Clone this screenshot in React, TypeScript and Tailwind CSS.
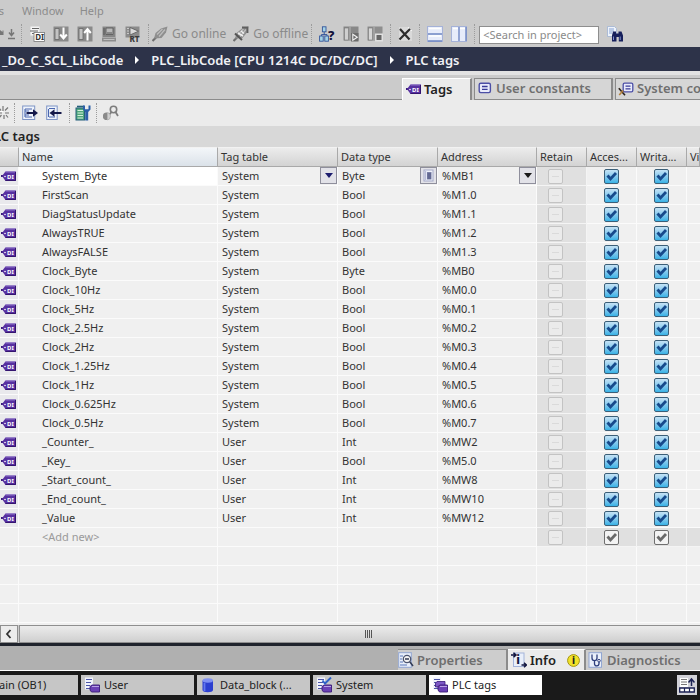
import React, { useState } from 'react';
import clsx from 'clsx';

interface ITag {
  name: string;
  table: string;
  type: string;
  address: string;
}

const TAGS: ITag[] = [
  { name: 'System_Byte', table: 'System', type: 'Byte', address: '%MB1' },
  { name: 'FirstScan', table: 'System', type: 'Bool', address: '%M1.0' },
  { name: 'DiagStatusUpdate', table: 'System', type: 'Bool', address: '%M1.1' },
  { name: 'AlwaysTRUE', table: 'System', type: 'Bool', address: '%M1.2' },
  { name: 'AlwaysFALSE', table: 'System', type: 'Bool', address: '%M1.3' },
  { name: 'Clock_Byte', table: 'System', type: 'Byte', address: '%MB0' },
  { name: 'Clock_10Hz', table: 'System', type: 'Bool', address: '%M0.0' },
  { name: 'Clock_5Hz', table: 'System', type: 'Bool', address: '%M0.1' },
  { name: 'Clock_2.5Hz', table: 'System', type: 'Bool', address: '%M0.2' },
  { name: 'Clock_2Hz', table: 'System', type: 'Bool', address: '%M0.3' },
  { name: 'Clock_1.25Hz', table: 'System', type: 'Bool', address: '%M0.4' },
  { name: 'Clock_1Hz', table: 'System', type: 'Bool', address: '%M0.5' },
  { name: 'Clock_0.625Hz', table: 'System', type: 'Bool', address: '%M0.6' },
  { name: 'Clock_0.5Hz', table: 'System', type: 'Bool', address: '%M0.7' },
  { name: '_Counter_', table: 'User', type: 'Int', address: '%MW2' },
  { name: '_Key_', table: 'User', type: 'Bool', address: '%M5.0' },
  { name: '_Start_count_', table: 'User', type: 'Int', address: '%MW8' },
  { name: '_End_count_', table: 'User', type: 'Int', address: '%MW10' },
  { name: '_Value', table: 'User', type: 'Int', address: '%MW12' },
];

const EMPTY_ROWS = [0, 1, 2, 3];

const Svg: React.FC<{ children: React.ReactNode; className?: string }> = ({ children, className }) => (
  <svg viewBox="0 0 16 16" className={clsx('shrink-0', className || 'size-4')} aria-hidden="true">
    {children}
  </svg>
);

const TagIcon = () => (
  <Svg>
    <path d="M1 8h3" stroke="#3b1d7a" strokeWidth="2" />
    <path d="M2 8L5.500 3.500H16v9.500H5.500z" fill="#5730a0" />
    <path d="M5.500 4H16" stroke="#8d72c8" strokeWidth="1" />
    <path d="M5.500 12.500H15.500V4" fill="none" stroke="#34146f" strokeWidth="1" />
    <circle cx="5" cy="8.500" r="0.800" fill="#fff" />
    <text x="7" y="10.500" fontSize="6" fontWeight="700" fill="#fff">DI</text>
  </Svg>
);

const ConstIcon = () => (
  <Svg>
    <rect x="2.2" y="3.2" width="11.2" height="9.4" rx="1.5" fill="#e9ebfb" stroke="#4c4fa6" strokeWidth="1.4" />
    <path d="M5 6.5h5.6M5 9.3h5.6" stroke="#3a3c98" strokeWidth="1.3" />
  </Svg>
);

const SysConstIcon = () => (
  <Svg>
    <rect x="5.2" y="3.2" width="9.6" height="8.6" rx="1.3" fill="#e9ebfb" stroke="#4c4fa6" strokeWidth="1.3" />
    <path d="M7.5 6.2h5M7.5 8.8h5" stroke="#3a3c98" strokeWidth="1.2" />
    <path d="M0.8 8.200l6.200 7" stroke="#2b211a" strokeWidth="1.600" />
    <path d="M1.200 15l4-4.600" stroke="#b5803c" strokeWidth="1.600" />
  </Svg>
);

const CompileIcon = () => (
  <Svg>
    <path d="M1.500 0.500h9v9h-9z" fill="#f4f4f4" />
    <path d="M3 2.500h7M1 5h8M3 7.500h3" stroke="#666" strokeWidth="1.200" />
    <rect x="5" y="6.500" width="10.500" height="9" fill="#fff" stroke="#777" strokeWidth="0.800" />
    <text x="6.200" y="14" fontSize="8" fontWeight="700" fill="#333">DI</text>
  </Svg>
);

const DownloadIcon = () => (
  <Svg>
    <rect x="0.500" y="0.500" width="15" height="15" fill="#8a8a8a" />
    <path d="M2 2.500h4v11H2z" fill="#c3c3c3" stroke="#666" strokeWidth="0.800" />
    <path d="M10.500 1.500v10M7.200 8.500l3.300 4 3.300-4" fill="none" stroke="#fff" strokeWidth="2" />
  </Svg>
);

const UploadIcon = () => (
  <Svg>
    <rect x="0.500" y="0.500" width="15" height="15" fill="#8a8a8a" />
    <path d="M2 2.500h4v11H2z" fill="#c3c3c3" stroke="#666" strokeWidth="0.800" />
    <path d="M10.500 14.500V4M7.200 7l3.300-4 3.300 4" fill="none" stroke="#fff" strokeWidth="2" />
  </Svg>
);

const SimIcon = () => (
  <Svg>
    <path d="M1.500 0.500h13v10.500h-13z" fill="#868686" />
    <path d="M5 2h7v6.500H5z" fill="#b9b9b9" stroke="#5c5c5c" strokeWidth="0.900" />
    <path d="M6 7h5M3 2v7" stroke="#555" strokeWidth="1" />
    <path d="M1 11.500h14v4H1z" fill="#8d8d8d" />
    <path d="M2.500 13.500h11" stroke="#ccc" strokeWidth="0.800" />
  </Svg>
);

const RuntimeIcon = () => (
  <Svg>
    <path d="M0.500 0.500h14v11h-14z" fill="#8b8b8b" />
    <path d="M2 2.500h2M2 5h2M2 7.500h2" stroke="#c8c8c8" strokeWidth="1" />
    <path d="M5 1.500l8.500 3.700L5 9z" fill="#dadada" stroke="#5b5b5b" strokeWidth="0.800" />
    <text x="4.500" y="15.500" fontSize="8" fontWeight="800" fill="#3a3a3a">RT</text>
  </Svg>
);

const OnlineIcon = ({ off = false }: { off?: boolean }) => (
  <Svg>
    <path d="M0.500 15l3.500-3.500" stroke="#6e6e6e" strokeWidth="2.200" />
    <path d="M2 12.500L3.500 7 9 2.500 15.500 0.500 14 6.500 9.500 12z" fill="#8f8f8f" />
    <path d="M5 8.500l5.500-5.500M7 10.500l6-7" stroke="#bdbdbd" strokeWidth="1.200" />
    {off && <path d="M2 7.500l7 6.500" stroke="#555" strokeWidth="2" />}
    {off && <path d="M9 1.500h5.500V7" fill="none" stroke="#5f5f5f" strokeWidth="1.800" />}
    {off && <path d="M5 7l5 3M8 5l3 2.500" stroke="#efefef" strokeWidth="1.500" />}
  </Svg>
);

const AccessibleIcon = () => (
  <Svg>
    <rect x="3.400" y="0.800" width="3.600" height="5" fill="#a5d3e6" stroke="#33559b" strokeWidth="0.900" />
    <path d="M5.200 6v3M2.400 11V8.600h5.600V11" fill="none" stroke="#33559b" strokeWidth="1" />
    <rect x="0.600" y="10" width="3.600" height="5.200" fill="#a5d3e6" stroke="#33559b" strokeWidth="0.900" />
    <rect x="5.800" y="10" width="3.600" height="5.200" fill="#a5d3e6" stroke="#33559b" strokeWidth="0.900" />
    <text x="9" y="13.500" fontSize="13" fontWeight="800" fill="#10103a">?</text>
  </Svg>
);

const StartCpuIcon = () => (
  <Svg>
    <rect x="0.500" y="0.500" width="15" height="14" fill="#888" />
    <rect x="1.500" y="2" width="4" height="12" fill="#cfcfcf" stroke="#777" strokeWidth="0.600" />
    <path d="M7 1v13.500" stroke="#a9a9a9" strokeWidth="1.400" />
    <rect x="8" y="7" width="7.500" height="8.500" fill="#6c6c6c" />
    <path d="M9.800 8.300l4.500 2.900-4.500 3z" fill="#6c6c6c" stroke="#f2f2f2" strokeWidth="1.100" />
  </Svg>
);

const StopCpuIcon = () => (
  <Svg>
    <rect x="0.500" y="0.500" width="15" height="14" fill="#8e8e8e" />
    <rect x="1.500" y="2" width="4" height="12" fill="#d6d6d6" stroke="#777" strokeWidth="0.600" />
    <path d="M7 1v13.500" stroke="#a9a9a9" strokeWidth="1.400" />
    <rect x="8" y="7.500" width="8" height="8" fill="#e0e0e0" />
    <rect x="9.500" y="9" width="5" height="5" fill="#666" />
  </Svg>
);

const CrossRefIcon = () => (
  <Svg>
    <path d="M2 1h9.500L15 4.500V15H2z" fill="#dadada" />
    <path d="M11.500 1v3.500H15" fill="none" stroke="#f5f5f5" strokeWidth="1.200" />
    <path d="M3 3l9.500 10.500M13 3L2.500 13.500" stroke="#2c2c2c" strokeWidth="2.200" />
  </Svg>
);

const SplitIcon = ({ vertical = false }: { vertical?: boolean }) => (
  <Svg>
    <rect x="0.500" y="0.500" width="15" height="15" fill="#e7ecfa" stroke="#a5b2d8" strokeWidth="1" />
    <path d={vertical ? 'M8 1v14M15 1v14' : 'M1 8h14M1 15h14'} stroke="#6f86c2" strokeWidth="1.400" />
    <path d={vertical ? 'M2 2.500h5M9 2.500h5' : 'M2 2.500h12M2 10h12'} stroke="#fff" strokeWidth="1.500" />
  </Svg>
);

const FindIcon = () => (
  <Svg>
    <path d="M0.500 0.500h7l2 2v8h-9z" fill="#eef3fb" stroke="#9fb2d3" strokeWidth="0.800" />
    <path d="M2 3h5M2 5h5M2 7h3" stroke="#7a9bd0" strokeWidth="0.900" />
    <path d="M6 5.500h3v2h2.500v-2h3L16 9.500v6h-4.200V11H9.500v4.500H5v-6z" fill="#17205c" />
    <path d="M6.500 10.500v3.500M13.200 10.500v3.500" stroke="#7f8fd0" strokeWidth="1" />
  </Svg>
);

const InsertIcon = () => (
  <Svg>
    <path d="M9 1v5M4.500 2.500L7 5.500M14 2.500L11 5.500M3 8h5M11 8h4M5 13l2.500-3M10 10v4M12 10l2 2.500" stroke="#777" strokeWidth="1.200" />
    <path d="M5 6.500h4" stroke="#fff" strokeWidth="1" />
  </Svg>
);

const ExportIcon = () => (
  <Svg>
    <rect x="0.700" y="1" width="12" height="13.500" fill="#eef3fb" stroke="#7f95c6" strokeWidth="1" />
    <path d="M3 4h7M3 6h4M3 10h4M3 12h7M3 4v8" stroke="#4a66b0" strokeWidth="1.100" fill="none" />
    <path d="M4.500 8H12" stroke="#14184a" strokeWidth="2" />
    <path d="M11 4.200L16 8l-5 3.800z" fill="#14184a" />
  </Svg>
);

const ImportIcon = () => (
  <Svg>
    <rect x="0.700" y="1" width="10.500" height="13.500" fill="#eef3fb" stroke="#7f95c6" strokeWidth="1" />
    <path d="M3 3.500h6M3 12h6M2.500 4v8" stroke="#4a66b0" strokeWidth="1.100" />
    <path d="M7 8h8.500" stroke="#14184a" strokeWidth="2" />
    <path d="M8.500 4.200L3.500 8l5 3.800z" fill="#14184a" />
  </Svg>
);

const MonitorAllIcon = () => (
  <Svg>
    <rect x="1" y="3" width="8.500" height="12" fill="#4fa77c" stroke="#245f7a" strokeWidth="1" />
    <path d="M2 1.500h7" stroke="#245f7a" strokeWidth="1.600" />
    <path d="M2.500 5.500h5.500M2.500 8h5.500M2.500 10.500h5.500M2.500 13h5.500" stroke="#d6f0dd" strokeWidth="1" />
    <path d="M8 0.500v4l2.200 2.500v8.500h3V7l2.300-2.500v-4h-2v3.800h-3.500V0.500z" fill="#2b5fa8" />
  </Svg>
);

const GlassesIcon = () => (
  <Svg>
    <circle cx="10.500" cy="4.500" r="3.200" fill="#ececec" stroke="#7d7d7d" strokeWidth="1.600" />
    <path d="M8.500 7L6.500 9.500M12.500 7l2.500 4" stroke="#7d7d7d" strokeWidth="1.800" />
    <path d="M4 7.500a3.600 3.800 0 1 0 0 7.500z" fill="#8a8a8a" />
    <path d="M4.500 7.500a3.600 3.800 0 0 1 0 7.500z" fill="#cfcfcf" stroke="#999" strokeWidth="0.600" />
  </Svg>
);

const PropertiesIcon = () => (
  <Svg>
    <rect x="0.700" y="0.700" width="12.600" height="14.600" fill="#e9effa" stroke="#91a6d2" strokeWidth="1" />
    <path d="M2 4h3M2 7h2M2 10h3M2 13h7" stroke="#5876b8" strokeWidth="1" />
    <circle cx="9" cy="7" r="3.700" fill="#f3f3f3" stroke="#4c5570" strokeWidth="1.300" />
    <path d="M7 7h4M11.800 9.800L15 14" stroke="#343c55" strokeWidth="1.600" />
  </Svg>
);

const InfoTabIcon = () => (
  <Svg>
    <rect x="2.500" y="1" width="10.500" height="13.500" fill="#e9effa" stroke="#a3b4da" strokeWidth="1" />
    <path d="M0 3h4M2.500 0.800L5 3 2.500 5.200M10.500 13h4.500M13 10.800l2.500 2.200-2.500 2.200" fill="none" stroke="#12163f" strokeWidth="1.500" />
    <text x="5.200" y="12" fontSize="12" fontWeight="800" fill="#12163f">i</text>
  </Svg>
);

const InfoBadgeIcon = () => (
  <Svg className="size-[13px]">
    <circle cx="8" cy="8" r="7.300" fill="#f1e228" stroke="#a39417" strokeWidth="1.200" />
    <text x="8" y="12.500" textAnchor="middle" fontSize="12" fontWeight="800" fill="#222">i</text>
  </Svg>
);

const DiagnosticsIcon = () => (
  <Svg>
    <rect x="1" y="0.700" width="12.500" height="14.600" fill="#e9effa" stroke="#91a6d2" strokeWidth="1" />
    <path d="M4 2.500v3.500c0 3.500 5 3.500 5 0V2.500M6.500 8.500v3.500c0 2.500 4.500 2.500 4.500-.5V10" fill="none" stroke="#2f3f7c" strokeWidth="1.300" />
    <circle cx="11" cy="8.700" r="1.300" fill="#fff" stroke="#2f3f7c" strokeWidth="1" />
  </Svg>
);

const TableTaskIcon = ({ check = false, stack = false }: { check?: boolean; stack?: boolean }) => (
  <Svg>
    <rect x="1" y="0.500" width="8" height="12" fill="#f1f3fc" />
    <path d="M2 2.500h6M2 5.500h5M2 8.500h4M2 11.500h4" stroke="#4b55a8" strokeWidth="1.200" />
    {stack && <path d="M3.500 6L5 4.500h8V10H3.500z" fill="#7d58c6" stroke="#3a1b78" strokeWidth="0.800" />}
    <path d="M6 9.500L8 8h7.500v7H7.500L6 13z" fill="#6b41b5" stroke="#3a1b78" strokeWidth="0.900" />
    <path d="M8 9.500h7" stroke="#b9a2e6" strokeWidth="1" />
    {check && <path d="M6.500 3.500L9 6.500l6-6" fill="none" stroke="#2f62c8" strokeWidth="1.900" />}
  </Svg>
);

const DataBlockIcon = () => (
  <Svg>
    <path d="M2.500 3.500v9.500c0 3 10.500 3 10.500 0V3.500z" fill="#2c3fd0" />
    <ellipse cx="7.800" cy="3.500" rx="5.200" ry="2.200" fill="#7f90f2" />
    <path d="M4.500 6v8" stroke="#6478ee" strokeWidth="1.800" />
  </Svg>
);

const LayoutIcon = () => (
  <Svg>
    <path d="M1 1h8v9H1z" fill="#fff" />
    <path d="M2 2.500h6M2 5h6M2 7.500h6" stroke="#777" strokeWidth="1" />
    <path d="M9.500 5.500L12.500 2l3 3.500M12.500 3v6" fill="none" stroke="#1c2255" strokeWidth="1.500" />
    <path d="M0.700 11h14.600v4H0.700z" fill="#fff" stroke="#1c2255" strokeWidth="1.300" />
    <path d="M5.500 11v4M10.500 11v4" stroke="#1c2255" strokeWidth="1.200" />
  </Svg>
);

const ToolButton: React.FC<{ label: string; children: React.ReactNode }> = ({ label, children }) => (
  <button type="button" aria-label={label} className="block shrink-0">
    {children}
  </button>
);

const Separator = () => <div className="h-5 w-px shrink-0 border-l border-dotted border-[#9c9c9c]" />;

const MenuBar = () => (
  <nav className="flex h-[22px] items-center gap-4 text-[11px] leading-4 text-[#8c8c8c]">
    <button type="button" className="-ml-6 w-7 text-right">Tools</button>
    <button type="button" className="ml-[2px]">Window</button>
    <button type="button">Help</button>
  </nav>
);

const MainToolbar = () => (
  <div className="flex h-[25px] items-center pb-[2px] text-[12px] leading-4 text-[#8a8a8a]">
    <div className="flex w-[21px] shrink-0 items-center">
      <ToolButton label="Redo">
        <Svg>
          <path d="M0 9V4l2.500 2V4.500h1V9z" fill="#777" />
          <path d="M11.500 3v6M9 6.500l2.500 3 2.500-3M8 12.500h7" fill="none" stroke="#777" strokeWidth="1.500" />
        </Svg>
      </ToolButton>
    </div>
    <Separator />
    <div className="flex shrink-0 gap-2 px-[7px]">
      <ToolButton label="Compile"><CompileIcon /></ToolButton>
      <ToolButton label="Download to device"><DownloadIcon /></ToolButton>
      <ToolButton label="Upload from device"><UploadIcon /></ToolButton>
      <ToolButton label="Start simulation"><SimIcon /></ToolButton>
      <ToolButton label="Start runtime"><RuntimeIcon /></ToolButton>
    </div>
    <Separator />
    <div className="flex shrink-0 gap-[7px] px-[3px]">
      <button type="button" className="flex items-center gap-1"><OnlineIcon />Go online</button>
      <button type="button" className="flex items-center gap-1"><OnlineIcon off />Go offline</button>
    </div>
    <Separator />
    <div className="flex shrink-0 gap-2 px-[7px]">
      <ToolButton label="Accessible devices"><AccessibleIcon /></ToolButton>
      <ToolButton label="Start CPU"><StartCpuIcon /></ToolButton>
      <ToolButton label="Stop CPU"><StopCpuIcon /></ToolButton>
    </div>
    <Separator />
    <div className="flex shrink-0 px-[6px]">
      <ToolButton label="Cross-references"><CrossRefIcon /></ToolButton>
    </div>
    <Separator />
    <div className="flex shrink-0 gap-2 px-[7px]">
      <ToolButton label="Split editor space horizontally"><SplitIcon /></ToolButton>
      <ToolButton label="Split editor space vertically"><SplitIcon vertical /></ToolButton>
    </div>
    <Separator />
    <input
      type="text"
      aria-label="Search in project"
      placeholder="<Search in project>"
      className="ml-1 mt-[2px] h-[18px] w-[120px] shrink-0 border border-[#8e8e8e] bg-white px-[3px] text-[11px] text-[#444] placeholder:text-[#8a8a8a]"
    />
    <div className="ml-2">
      <ToolButton label="Find"><FindIcon /></ToolButton>
    </div>
  </div>
);

const Crumbs = () => (
  <nav className="flex h-6 items-center whitespace-nowrap bg-[#2d3349] pl-[2px] pt-[2px] text-[13px] font-semibold leading-4 text-[#f0f1f5]">
    <a href="#project">_Do_C_SCL_LibCode</a>
    <span className="mx-3 border-y-4 border-l-4 border-y-transparent border-l-white" />
    <a href="#plc">PLC_LibCode [CPU 1214C DC/DC/DC]</a>
    <span className="mx-3 border-y-4 border-l-4 border-y-transparent border-l-white" />
    <a href="#tags">PLC tags</a>
  </nav>
);

const EDITOR_TABS = [
  { label: 'Tags', icon: <TagIcon />, width: 'w-[70px]' },
  { label: 'User constants', icon: <ConstIcon />, width: 'w-[139px]' },
  { label: 'System constants', icon: <SysConstIcon />, width: 'w-[150px]' },
];

const EditorTabs = () => {
  const [active, setActive] = useState('Tags');

  return (
    <div className="flex h-[29px] items-end overflow-hidden border-t-4 border-[#e2e2e2] bg-[#cbcbcb]">
      <div className="h-full w-[402px] shrink-0 border-b border-[#8b8b8b]" />
      {EDITOR_TABS.map((tab) => (
        <button
          key={tab.label}
          type="button"
          onClick={() => setActive(tab.label)}
          className={clsx(
            'mr-[2px] flex h-[22px] shrink-0 items-center gap-[3px] whitespace-nowrap border-l border-r-2 border-t px-[2px] pb-[2px] text-[13px] font-semibold leading-4',
            tab.width,
            active === tab.label
              ? 'border-[#8b8b8b] border-l-white border-t-white bg-[#ebebeb] text-[#222]'
              : 'border-[#8b8b8b] border-b bg-[#d6d6d6] text-[#6f6f6f]'
          )}
        >
          {tab.icon}
          {tab.label}
        </button>
      ))}
    </div>
  );
};

const EditorToolbar = () => (
  <div className="flex h-[26px] items-center bg-[#ebebeb]">
    <div className="-ml-[6px] w-[20px]"><ToolButton label="Insert row"><InsertIcon /></ToolButton></div>
    <Separator />
    <div className="flex gap-2 px-[7px]">
      <ToolButton label="Export"><ExportIcon /></ToolButton>
      <ToolButton label="Import"><ImportIcon /></ToolButton>
    </div>
    <Separator />
    <div className="px-[5px]"><ToolButton label="Monitor configuration"><MonitorAllIcon /></ToolButton></div>
    <Separator />
    <div className="px-[6px]"><ToolButton label="Monitor all"><GlassesIcon /></ToolButton></div>
  </div>
);

interface ICheckProps {
  label: string;
  checked?: boolean;
  muted?: boolean;
  disabled?: boolean;
}

const Check: React.FC<ICheckProps> = ({ label, checked = false, muted = false, disabled = false }) => {
  const [on, setOn] = useState(checked);

  return (
    <label className="relative mx-auto block size-[15px]">
      <input
        type="checkbox"
        aria-label={label}
        checked={on}
        disabled={disabled}
        onChange={() => setOn(!on)}
        className={clsx(
          'block size-[15px] appearance-none rounded-[2px] border',
          disabled && 'border-[#c3c3c3] bg-[#ebebeb]',
          !disabled && muted && 'border-[#6f6f6f] bg-[#f3f3f3]',
          !disabled && !muted && 'border-[#3b5f78] bg-linear-to-b from-[#c4e2f5] to-[#35b2e6]'
        )}
      />
      {on && (
        <svg viewBox="0 0 15 15" className="pointer-events-none absolute inset-0" aria-hidden="true">
          <path d="M3.500 6.500l3 3.500 5.500-6" fill="none" stroke={muted ? '#6a6a6a' : '#174a8c'} strokeWidth="2.800" />
        </svg>
      )}
      {disabled && (
        <span className="pointer-events-none absolute inset-x-1 top-[7px] h-px bg-[#dadada]" />
      )}
    </label>
  );
};

const HEADS = ['Name', 'Tag table', 'Data type', 'Address', 'Retain', 'Acces...', 'Writa...', 'Visible'];

const cell = 'h-[19px] border-b border-r border-b-[#fbfbfb] border-r-[#fbfbfb] p-0 pl-1';
const smallButton = 'grid h-[17px] w-[17px] shrink-0 place-items-center border border-[#8f8f9c] bg-[#e2e2e8]';

const TagRow: React.FC<{ tag: ITag; selected: boolean }> = ({ tag, selected }) => (
  <tr>
    <td className="h-[19px] border-b border-r border-[#fbfbfb] bg-[#e9e9ec] p-0"><TagIcon /></td>
    <td className={clsx(cell, 'border-r-[#d5d5dc]', selected && 'bg-white')}>
      {selected ? (
        <input aria-label="Name" defaultValue={tag.name} className="block h-[18px] w-full bg-white pl-[19px]" />
      ) : (
        <div className="pl-[19px]">{tag.name}</div>
      )}
    </td>
    <td className={cell}>
      {selected ? (
        <div className="relative h-[18px]">
          <select aria-label="Tag table" defaultValue={tag.table} className="block h-[18px] w-full appearance-none">
            <option>System</option>
            <option>User</option>
          </select>
          <span className={clsx(smallButton, 'pointer-events-none absolute right-0 top-0')}>
            <span className="border-x-4 border-t-[5px] border-x-transparent border-t-[#1c1c6e]" />
          </span>
        </div>
      ) : (
        tag.table
      )}
    </td>
    <td className={cell}>
      {selected ? (
        <div className="flex h-[18px]">
          <input aria-label="Data type" defaultValue={tag.type} className="block h-[18px] w-full min-w-0" />
          <button type="button" aria-label="Choose data type" className={smallButton}>
            <svg viewBox="0 0 15 15" className="size-[15px]" aria-hidden="true">
              <rect x="3" y="2" width="9" height="11" fill="#f0f2fb" stroke="#a3a8c6" strokeWidth="1" />
              <path d="M4.500 3v9" stroke="#b9bdd8" strokeWidth="1.500" />
              <rect x="6" y="4" width="4.500" height="7.500" fill="#7d83a8" />
              <path d="M6.500 6h3.500M6.500 8h3.500M6.500 10h3.500" stroke="#454b78" strokeWidth="0.900" />
            </svg>
          </button>
        </div>
      ) : (
        tag.type
      )}
    </td>
    <td className={cell}>
      {selected ? (
        <div className="flex h-[18px]">
          <input aria-label="Address" defaultValue={tag.address} className="block h-[18px] w-full min-w-0" />
          <button type="button" aria-label="Choose address" className={smallButton}>
            <span className="border-x-4 border-t-[5px] border-x-transparent border-t-[#1a1a1a]" />
          </button>
        </div>
      ) : (
        tag.address
      )}
    </td>
    <td className="border-b border-r border-[#f4f4f4] bg-[#e0e0e0] p-0 pr-3"><Check label={`Retain ${tag.name}`} disabled /></td>
    <td className="border-b border-r border-[#fbfbfb] p-0"><Check label={`Accessible ${tag.name}`} checked /></td>
    <td className="border-b border-r border-[#fbfbfb] p-0"><Check label={`Writable ${tag.name}`} checked /></td>
    <td className="border-b border-[#fbfbfb] p-0" />
  </tr>
);

const TagTable = () => (
  <div className="overflow-hidden bg-[#f0f0f0] pb-[2px]">
    <table className="w-full table-fixed border-separate border-spacing-0 text-[11px] leading-[18px] text-[#333]">
      <colgroup>
        <col className="w-[19px]" />
        <col className="w-[199px]" />
        <col className="w-[120px]" />
        <col className="w-[100px]" />
        <col className="w-[99px]" />
        <col className="w-[50px]" />
        <col className="w-[50px]" />
        <col className="w-[50px]" />
        <col />
      </colgroup>
      <thead>
        <tr className="h-5">
          <th className="border-b border-r border-t border-[#a9a9a9] border-t-[#f2f2f2] bg-linear-to-b from-[#ececec] to-[#cfcfcf] p-0" aria-label="Icon" />
          {HEADS.map((head, i) => (
            <th
              key={head}
              className={clsx(
                'h-5 overflow-hidden whitespace-nowrap border-b border-r border-t border-[#a9a9a9] border-t-[#f2f2f2] bg-linear-to-b p-0 pl-[3px] text-left font-normal',
                i === 0 ? 'from-[#f3f6f9] to-[#dbe2e9]' : 'from-[#ececec] to-[#d3d3d3]'
              )}
            >
              {head}
            </th>
          ))}
        </tr>
      </thead>
      <tbody>
        {TAGS.map((tag, i) => (
          <TagRow key={tag.name} tag={tag} selected={i === 0} />
        ))}
        <tr>
          <td className={cell} />
          <td className={clsx(cell, 'border-r-[#d5d5dc] text-[#9a9a9a]')}><div className="pl-[19px]">&lt;Add new&gt;</div></td>
          <td className={cell} />
          <td className={cell} />
          <td className={cell} />
          <td className="border-b border-r border-[#f4f4f4] bg-[#e0e0e0] p-0 pr-3"><Check label="Retain new tag" disabled /></td>
          <td className="border-b border-r border-[#f4f4f4] bg-[#e0e0e0] p-0"><Check label="Accessible new tag" checked muted /></td>
          <td className="border-b border-r border-[#f4f4f4] bg-[#e0e0e0] p-0"><Check label="Writable new tag" checked muted /></td>
          <td className="border-b border-[#f4f4f4] bg-[#e0e0e0] p-0" />
        </tr>
        {EMPTY_ROWS.map((n) => (
          <tr key={n}>
            <td className={cell} />
            <td className={clsx(cell, 'border-r-[#d5d5dc]')} />
            <td className={cell} />
            <td className={cell} />
            <td className={cell} />
            <td className={cell} />
            <td className={cell} />
            <td className={cell} />
            <td className="border-b border-[#fbfbfb] p-0" />
          </tr>
        ))}
      </tbody>
    </table>
  </div>
);

const HScroll = () => (
  <div className="flex h-[18px] gap-px bg-[#c9c9c9]">
    <button type="button" aria-label="Scroll left" className="grid w-[18px] shrink-0 place-items-center border border-[#8f8f8f] bg-[#ececec]">
      <svg viewBox="0 0 10 10" className="size-[10px]" aria-hidden="true">
        <path d="M6.500 1L3 5l3.500 4" fill="none" stroke="#333" strokeWidth="1.800" />
      </svg>
    </button>
    <div className="flex flex-1 items-center justify-center gap-px border border-r-0 border-[#8f8f8f] bg-linear-to-b from-[#ececec] to-[#cfcfcf] pl-4">
      <span className="h-2 w-px bg-[#555]" />
      <span className="h-2 w-px bg-[#555]" />
      <span className="h-2 w-px bg-[#555]" />
      <span className="h-2 w-px bg-[#555]" />
    </div>
  </div>
);

const InspectorTabs = () => (
  <div className="flex h-[28px] items-end justify-end overflow-hidden border-b border-t-[3px] border-b-white border-t-[#1f232c] bg-[#b0b0b0] text-[13px] font-semibold leading-4">
    <button type="button" className="flex h-[21px] w-[110px] shrink-0 items-center gap-[3px] border-r-2 border-t border-[#8b8b8b] bg-[#cdcdcd] text-[#6f6f6f]">
      <PropertiesIcon />
      Properties
    </button>
    <button type="button" className="flex h-[21px] w-[78px] shrink-0 items-center gap-[3px] border-r-2 border-t border-[#8b8b8b] border-t-white bg-[#ebebeb] pl-[3px] text-[#222]">
      <InfoTabIcon />
      Info
      <span className="ml-auto mr-1"><InfoBadgeIcon /></span>
    </button>
    <button type="button" className="flex h-[21px] w-[114px] shrink-0 items-center gap-[3px] border-t border-[#8b8b8b] bg-[#cdcdcd] pl-[2px] text-[#6f6f6f]">
      <DiagnosticsIcon />
      Diagnostics
    </button>
  </div>
);

const TASKS = [
  { label: 'User', icon: <TableTaskIcon />, active: false },
  { label: 'Data_block (...', icon: <DataBlockIcon />, active: false },
  { label: 'System', icon: <TableTaskIcon check />, active: false },
  { label: 'PLC tags', icon: <TableTaskIcon stack />, active: true },
];

const TaskBar = () => (
  <div className="flex flex-1 items-start gap-[3px] overflow-hidden bg-[#1a1a1a] pb-[5px] pt-[4px] text-[11px] leading-4 text-[#222]">
    <button type="button" className="-ml-[35px] h-5 w-[113px] shrink-0 bg-[#c6c6c6] pl-6 text-left">Main (OB1)</button>
    {TASKS.map((task) => (
      <button
        key={task.label}
        type="button"
        className={clsx(
          'flex h-5 w-[113px] shrink-0 items-center gap-1 pl-[3px]',
          task.active ? 'bg-white' : 'bg-[#c6c6c6]'
        )}
      >
        {task.icon}
        {task.label}
      </button>
    ))}
    <button type="button" aria-label="Editor layout" className="ml-auto mr-[3px] grid size-5 shrink-0 place-items-center bg-[#d2d2d8]">
      <LayoutIcon />
    </button>
  </div>
);

const App: React.FC = () => (
  <div className="flex min-h-screen w-full flex-col overflow-hidden bg-[#cbcbcb] font-['Noto_Sans','Open_Sans',sans-serif]">
    <MenuBar />
    <MainToolbar />
    <Crumbs />
    <EditorTabs />
    <EditorToolbar />
    <h1 className="-ml-[14px] h-[21px] bg-[#d8d8d8] text-[13px] font-semibold leading-[21px] text-[#222]">PLC tags</h1>
    <TagTable />
    <HScroll />
    <InspectorTabs />
    <TaskBar />
  </div>
);

export default App;
